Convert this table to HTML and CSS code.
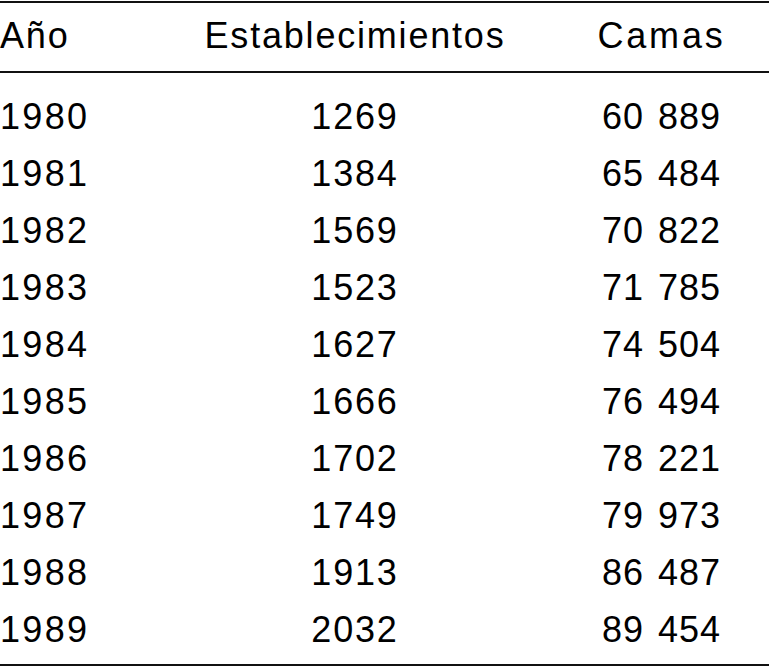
FILE: index.html
```html
<!DOCTYPE html>
<html lang="es">
<head>
<meta charset="utf-8">
<title>Establecimientos y camas</title>
<link rel="stylesheet" href="styles.css">
</head>
<body>
<table class="data">
  <thead>
    <tr>
      <th class="c-year">Año</th>
      <th class="c-est">Establecimientos</th>
      <th class="c-beds head-beds">Camas</th>
    </tr>
  </thead>
  <tbody>
    <tr><td class="c-year">1980</td><td class="c-est">1269</td><td class="c-beds">60 889</td></tr>
    <tr><td class="c-year">1981</td><td class="c-est">1384</td><td class="c-beds">65 484</td></tr>
    <tr><td class="c-year">1982</td><td class="c-est">1569</td><td class="c-beds">70 822</td></tr>
    <tr><td class="c-year">1983</td><td class="c-est">1523</td><td class="c-beds">71 785</td></tr>
    <tr><td class="c-year">1984</td><td class="c-est">1627</td><td class="c-beds">74 504</td></tr>
    <tr><td class="c-year">1985</td><td class="c-est">1666</td><td class="c-beds">76 494</td></tr>
    <tr><td class="c-year">1986</td><td class="c-est">1702</td><td class="c-beds">78 221</td></tr>
    <tr><td class="c-year">1987</td><td class="c-est">1749</td><td class="c-beds">79 973</td></tr>
    <tr><td class="c-year">1988</td><td class="c-est">1913</td><td class="c-beds">86 487</td></tr>
    <tr><td class="c-year">1989</td><td class="c-est">2032</td><td class="c-beds">89 454</td></tr>
  </tbody>
</table>
</body>
</html>
```
FILE: styles.css
```css
html, body {
  margin: 0;
  padding: 0;
  background: #fff;
}
body {
  padding-top: 1px;
  font-family: "Liberation Sans", Arial, sans-serif;
  font-size: 36px;
  color: #000;
}
.data {
  width: 769px;
  border-collapse: collapse;
  table-layout: fixed;
  letter-spacing: 1.8px;
}
.data th,
.data td {
  padding: 0;
  font-weight: normal;
  white-space: pre;
}
.data thead tr {
  border-top: 2px solid #111;
  border-bottom: 2px solid #111;
}
.data th {
  line-height: 66px;
  padding-bottom: 2px;
}
.data td {
  line-height: 57px;
}
.data tbody tr:first-child td {
  padding-top: 15px;
}
.data tbody tr:last-child td {
  padding-bottom: 6px;
}
.data tbody tr:last-child {
  border-bottom: 2px solid #111;
}
.c-year {
  width: 200px;
  text-align: left;
}
.data td.c-year {
  letter-spacing: 2.3px;
}
.c-est {
  width: 310px;
  text-align: center;
}
.c-beds {
  width: 215px;
  padding-left: 44px !important;
  text-align: center;
}
.data td.c-beds {
  letter-spacing: 1px;
  word-spacing: 3px;
}
.head-beds {
  letter-spacing: 2.8px;
}
```
